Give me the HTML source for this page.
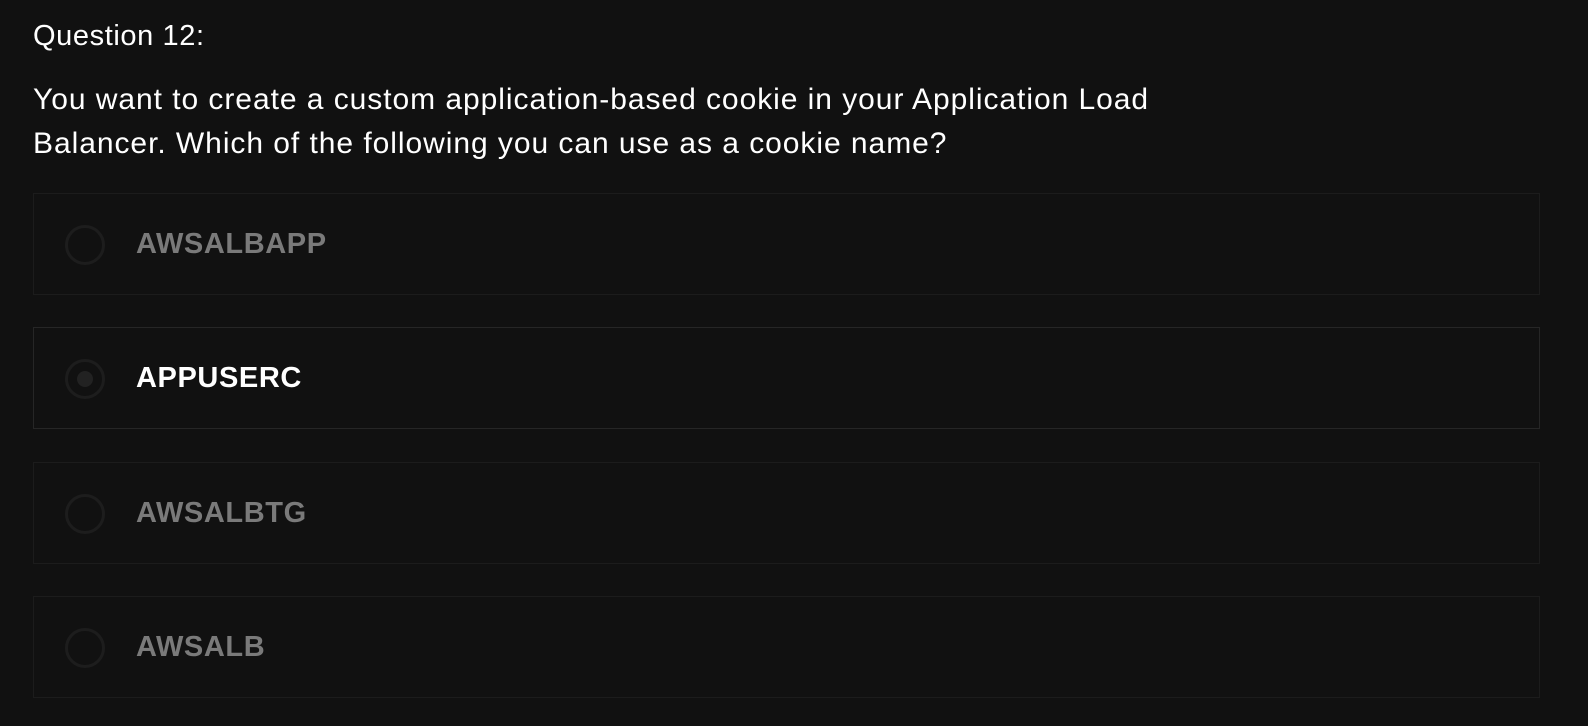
<!DOCTYPE html>
<html><head><style>
html,body{margin:0;padding:0;background:#111111;width:1588px;height:726px;overflow:hidden;font-family:"Liberation Sans",Arial,sans-serif;color:#fff;}
.q{position:absolute;left:33px;top:20px;font-size:29px;letter-spacing:0.6px;}
.t{position:absolute;left:33px;top:78px;font-size:30px;line-height:44px;width:1300px;letter-spacing:0.95px;}
.box{position:absolute;left:33px;width:1505px;height:100px;border:1px solid #1c1c1c;box-sizing:content-box;}
.box.sel{border-color:#262626;}
.r{position:absolute;left:31px;top:31px;width:34px;height:34px;border:3px solid #1d1d1d;border-radius:50%;}
.r.s::after{content:"";position:absolute;left:9px;top:9px;width:16px;height:16px;border-radius:50%;background:#222;}
.l{position:absolute;left:102px;top:32px;font-size:29px;font-weight:bold;color:#7a7a7a;line-height:36px;letter-spacing:0.6px;}
.sel .l{color:#fff;}
</style></head><body>
<div class="q">Question 12:</div>
<div class="t">You want to create a custom application-based cookie in your Application Load<br>Balancer. Which of the following you can use as a cookie name?</div>
<div class="box" style="top:193px"><div class="r"></div><div class="l">AWSALBAPP</div></div>
<div class="box sel" style="top:327px"><div class="r s"></div><div class="l">APPUSERC</div></div>
<div class="box" style="top:462px"><div class="r"></div><div class="l">AWSALBTG</div></div>
<div class="box" style="top:596px"><div class="r"></div><div class="l">AWSALB</div></div>
</body></html>
